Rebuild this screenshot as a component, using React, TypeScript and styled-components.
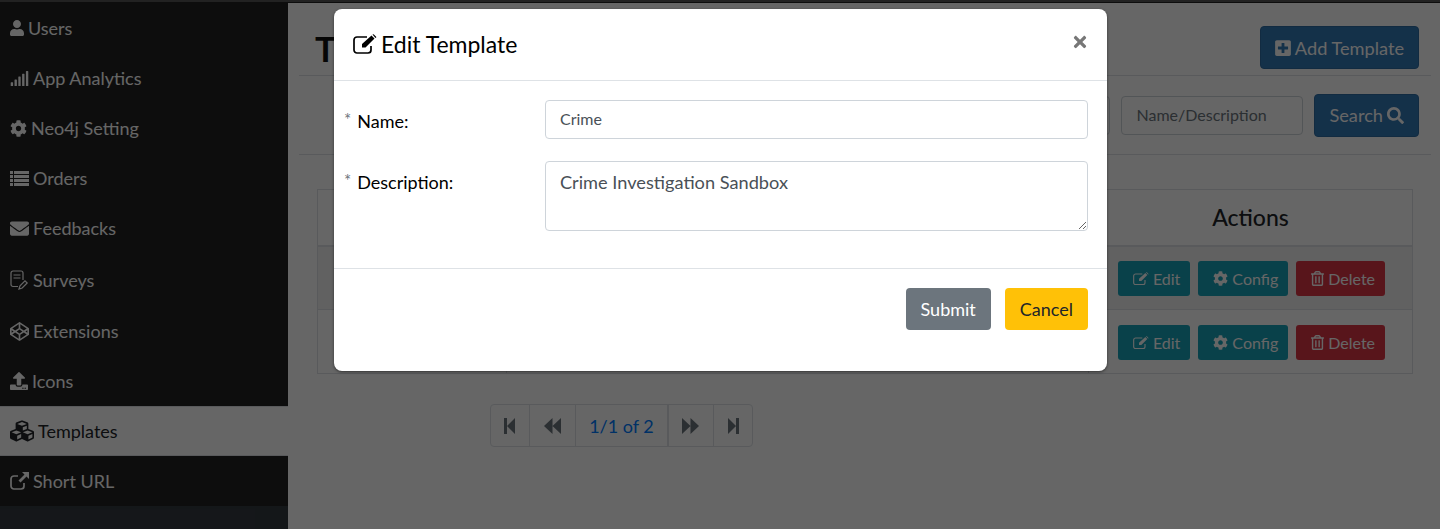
import { ReactNode } from 'react';
import styled, { createGlobalStyle } from 'styled-components';
import {
  FaCodepen,
  FaCog,
  FaCubes,
  FaEnvelope,
  FaPlusSquare,
  FaRegTrashAlt,
  FaSearch,
  FaSignal,
  FaTimes,
  FaUpload,
  FaUser,
} from 'react-icons/fa';

const ListIcon = () => (
  <svg width="19" height="15" viewBox="0 0 19 15" fill="currentColor">
    {[0, 4, 8, 12].map((y) => (
      <g key={y}>
        <rect x="0" y={y} width="3" height="3" />
        <rect x="4" y={y} width="15" height="3" />
      </g>
    ))}
  </svg>
);

const SurveyIcon = () => (
  <svg width="19" height="20" viewBox="0 0 19 20" fill="none" stroke="currentColor" strokeWidth="1.2">
    <path d="M8 16.5H3a2 2 0 0 1-2-2V3a2 2 0 0 1 2-2h8a2 2 0 0 1 2 2v7" />
    <path d="M3.5 5h7M3.5 8h7" />
    <path d="M9 19l1-3.2 5-5 2.2 2.2-5 5z" />
  </svg>
);

const ShareIcon = () => (
  <svg width="19" height="18" viewBox="0 0 19 18">
    <path d="M14 11v3a3 3 0 0 1-3 3H4a3 3 0 0 1-3-3V7a3 3 0 0 1 3-3h4" fill="none" stroke="currentColor" strokeWidth="1.7" />
    <path d="M12 0h7v7l-2.500-2.500-6 6-2-2 6-6z" fill="currentColor" />
  </svg>
);

const EditIcon = ({ width }: { width: number }) => (
  <svg width={width} height={(width * 20) / 24} viewBox="0 0 24 20">
    <path d="M18 12v4a3 3 0 0 1-3 3H4a3 3 0 0 1-3-3V6a3 3 0 0 1 3-3h10" fill="none" stroke="currentColor" strokeWidth="1.7" />
    <path d="M9 13.500v-3.500L18.500 1.500l3 3L12.500 13.500zM19.500 0.500a1 1 0 0 1 1.400 0l2 2a1 1 0 0 1 0 1.400L22 3.500z" fill="currentColor" />
  </svg>
);

const DoubleArrow = ({ flip }: { flip?: boolean }) => (
  <PagerSvg $flip={flip} width="17" height="16" viewBox="0 0 17 16">
    <path d="M0 8l8.500-8v16zM8.500 8L17 0v16z" fill="currentColor" />
  </PagerSvg>
);

const StepArrow = ({ flip }: { flip?: boolean }) => (
  <PagerSvg $flip={flip} width="11" height="16" viewBox="0 0 11 16">
    <path d="M0 0h3v16H0zM3 8l8-8v16z" fill="currentColor" />
  </PagerSvg>
);

const menu: { label: string; icon: ReactNode; slot: number; active?: boolean; tall?: boolean }[] = [
  { label: 'Users', icon: <FaUser size={16} />, slot: 14 },
  { label: 'App Analytics', icon: <FaSignal size={19} />, slot: 19 },
  { label: 'Neo4j Setting', icon: <FaCog size={17} />, slot: 17 },
  { label: 'Orders', icon: <ListIcon />, slot: 19 },
  { label: 'Feedbacks', icon: <FaEnvelope size={19} />, slot: 19 },
  { label: 'Surveys', icon: <SurveyIcon />, slot: 19, tall: true },
  { label: 'Extensions', icon: <FaCodepen size={19} />, slot: 19 },
  { label: 'Icons', icon: <FaUpload size={18} />, slot: 18 },
  { label: 'Templates', icon: <FaCubes size={24} />, slot: 24, active: true },
  { label: 'Short URL', icon: <ShareIcon />, slot: 19 },
];

const RowActions = () => (
  <Actions>
    <SmallButton $color="#17a2b8">
      <EditIcon width={16} /> Edit
    </SmallButton>
    <SmallButton $color="#17a2b8">
      <FaCog size={15} /> Config
    </SmallButton>
    <SmallButton $color="#dc3545">
      <IconSlot $width={13}>
        <FaRegTrashAlt size={15} />
      </IconSlot>{' '}
      Delete
    </SmallButton>
  </Actions>
);

export default function App() {
  return (
    <>
      <GlobalStyle />
      <Page>
        <TopBar />
        <Columns>
          <Sidebar>
            {menu.map((item) => (
              <MenuItem key={item.label} $active={item.active} $tall={item.tall}>
                <IconSlot $width={item.slot}>{item.icon}</IconSlot>
                {item.label}
              </MenuItem>
            ))}
          </Sidebar>
          <Main>
            <TitleRow>
              <Title>Templates</Title>
              <PrimaryButton>
                <IconSlot $width={16}>
                  <FaPlusSquare size={18} />
                </IconSlot>{' '}
                Add Template
              </PrimaryButton>
            </TitleRow>
            <FilterRow>
              <FilterSelect />
              <FilterInput placeholder="Name/Description" />
              <PrimaryButton>
                Search <FaSearch size={17} />
              </PrimaryButton>
            </FilterRow>
            <Table>
              <thead>
                <tr>
                  <HeadCell>Name</HeadCell>
                  <HeadCell>Description</HeadCell>
                  <HeadCell $width={324}>Actions</HeadCell>
                </tr>
              </thead>
              <tbody>
                <ShadedRow>
                  <Cell>Crime</Cell>
                  <Cell>Crime Investigation Sandbox</Cell>
                  <Cell>
                    <RowActions />
                  </Cell>
                </ShadedRow>
                <tr>
                  <Cell>Fraud</Cell>
                  <Cell>Fraud Detection Sandbox</Cell>
                  <Cell>
                    <RowActions />
                  </Cell>
                </tr>
              </tbody>
            </Table>
            <Pager>
              <PagerItem $width={38}>
                <StepArrow />
              </PagerItem>
              <PagerItem $width={47}>
                <DoubleArrow />
              </PagerItem>
              <PagerText $width={93}>1/1 of 2</PagerText>
              <PagerItem $width={46}>
                <DoubleArrow flip />
              </PagerItem>
              <PagerItem $width={39}>
                <StepArrow flip />
              </PagerItem>
            </Pager>
          </Main>
        </Columns>
        <Overlay>
          <Modal>
            <ModalHeader>
              <ModalTitle>
                <EditIcon width={24} /> Edit Template
              </ModalTitle>
              <CloseButton>
                <FaTimes size={18} />
              </CloseButton>
            </ModalHeader>
            <ModalBody>
              <FormRow>
                <FieldLabel>
                  <Star>*</Star>Name:
                </FieldLabel>
                <TextInput defaultValue="Crime" />
              </FormRow>
              <FormRow>
                <FieldLabel>
                  <Star>*</Star>Description:
                </FieldLabel>
                <TextArea defaultValue="Crime Investigation Sandbox" />
              </FormRow>
            </ModalBody>
            <ModalFooter>
              <FooterButton $bg="#6c757d" $fg="#fff">Submit</FooterButton>
              <FooterButton $bg="#ffc107" $fg="#212529">Cancel</FooterButton>
            </ModalFooter>
          </Modal>
        </Overlay>
      </Page>
    </>
  );
}

const GlobalStyle = createGlobalStyle`
  html, body {
    margin: 0;
    height: 100%;
    background: #fff;
    font-family: Lato, 'Liberation Sans', sans-serif;
  }
  * {
    box-sizing: border-box;
  }
`;

const Page = styled.div`
  height: 529px;
  overflow: hidden;
  display: flex;
  flex-direction: column;
  position: relative;
`;

const TopBar = styled.div`
  height: 3px;
  flex: none;
  background: #555;
  border-bottom: 1px solid #222;
`;

const Columns = styled.div`
  flex: 1;
  display: flex;
  min-height: 0;
`;

const Sidebar = styled.nav`
  width: 288px;
  flex: none;
  background: #343a40;
`;

const MenuItem = styled.div<{ $active?: boolean; $tall?: boolean }>`
  display: flex;
  align-items: center;
  gap: 4px;
  height: ${(p) => (p.$tall ? 53 : 50)}px;
  padding: 0 10px;
  font-size: 18px;
  color: ${(p) => (p.$active ? '#212529' : '#fff')};
  background: ${(p) => (p.$active ? '#fff' : '#222')};
  box-shadow: ${(p) => (p.$active ? 'inset 0 1px #dee2e6, inset 0 -1px #dee2e6' : 'none')};
`;

const IconSlot = styled.span<{ $width: number }>`
  flex: none;
  width: ${(p) => p.$width}px;
  display: flex;
  justify-content: center;
  svg {
    flex: none;
  }
`;

const Main = styled.main`
  flex: 1;
  min-width: 0;
  padding: 0 9px 0 11px;
`;

const TitleRow = styled.div`
  display: flex;
  justify-content: space-between;
  align-items: center;
  height: 73px;
  padding: 17px 12px 0 16px;
  border-bottom: 1px solid #dee2e6;
  overflow: hidden;
`;

const Title = styled.h1`
  margin: 0;
  font-size: 35px;
  font-weight: 700;
  letter-spacing: 3px;
  color: #111;
`;

const PrimaryButton = styled.button`
  display: inline-flex;
  align-items: center;
  gap: 4px;
  height: 43px;
  padding: 0 14px;
  border: 1px solid #2e6da4;
  border-radius: 4px;
  background: #337ab7;
  color: #fff;
  font: inherit;
  font-size: 18.200px;
`;

const FilterRow = styled.div`
  display: flex;
  justify-content: flex-end;
  align-items: center;
  gap: 11px;
  height: 79px;
  padding-right: 12px;
  border-bottom: 1px solid #dee2e6;
`;

const FilterSelect = styled.div`
  width: 200px;
  height: 39px;
  border: 1px solid #ced4da;
  border-radius: 4px;
`;

const FilterInput = styled.input`
  width: 182px;
  height: 39px;
  padding: 0 14px 2px;
  border: 1px solid #ced4da;
  border-radius: 4px;
  font: inherit;
  font-size: 16px;
  background: #fff;
  &::placeholder {
    color: #6c757d;
    opacity: 1;
  }
`;

const Table = styled.table`
  width: 1096px;
  margin: 34px 0 0 18px;
  border-collapse: collapse;
  color: #212529;
`;

const HeadCell = styled.th<{ $width?: number }>`
  height: 56px;
  width: ${(p) => (p.$width ? `${p.$width}px` : 'auto')};
  border: 1px solid #dee2e6;
  border-bottom-width: 2px;
  font-size: 23px;
  font-weight: 500;
`;

const ShadedRow = styled.tr`
  background: rgba(0, 0, 0, 0.05);
`;

const Cell = styled.td`
  height: 64px;
  padding: 2px 18px 0 20px;
  border: 1px solid #dee2e6;
  font-size: 18px;
`;

const Actions = styled.div`
  display: flex;
  justify-content: center;
  gap: 8px;
`;

const SmallButton = styled.button<{ $color: string }>`
  display: inline-flex;
  align-items: center;
  gap: 4px;
  height: 35px;
  padding: 0 10px 0 15px;
  border: 0;
  border-radius: 3px;
  background: ${(p) => p.$color};
  color: #fff;
  font: inherit;
  font-size: 16px;
`;

const Pager = styled.div`
  display: flex;
  width: 263px;
  height: 43px;
  margin: 30px 0 0 191px;
  border: 1px solid #dee2e6;
  border-radius: 4px;
`;

const PagerItem = styled.div<{ $width: number }>`
  width: ${(p) => p.$width}px;
  display: flex;
  align-items: center;
  justify-content: center;
  color: #6c757d;
  & + & {
    border-left: 1px solid #dee2e6;
  }
`;

const PagerSvg = styled.svg<{ $flip?: boolean }>`
  transform: ${(p) => (p.$flip ? 'scaleX(-1)' : 'none')};
`;

const PagerText = styled(PagerItem)`
  border-left: 1px solid #dee2e6;
  border-right: 1px solid #dee2e6;
  color: #007bff;
  font-size: 18px;
`;

const Overlay = styled.div`
  position: absolute;
  inset: 0;
  background: rgba(0, 0, 0, 0.6);
  display: flex;
  justify-content: center;
  align-items: flex-start;
  padding: 9px 0 0 1px;
`;

const Modal = styled.div`
  width: 773px;
  height: 362px;
  background: #fff;
  border-radius: 8px;
  box-shadow: 0 1px 3px rgba(0, 0, 0, 0.5);
  display: flex;
  flex-direction: column;
`;

const ModalHeader = styled.div`
  height: 72px;
  flex: none;
  display: flex;
  justify-content: space-between;
  padding: 0 18px 0 19px;
  border-bottom: 1px solid #dee2e6;
`;

const ModalTitle = styled.h5`
  display: flex;
  align-items: center;
  gap: 4px;
  margin: 0;
  padding-bottom: 2px;
  font-size: 23px;
  font-weight: 400;
  color: #000;
`;

const CloseButton = styled.button`
  align-self: flex-start;
  margin-top: 24px;
  padding: 0;
  border: 0;
  background: none;
  color: #777;
  display: flex;
`;

const ModalBody = styled.div`
  height: 188px;
  flex: none;
  padding: 19px 19px 0 10px;
  display: flex;
  flex-direction: column;
  gap: 22px;
  border-bottom: 1px solid #dee2e6;
`;

const FormRow = styled.div`
  display: grid;
  grid-template-columns: 201px 1fr;
`;

const FieldLabel = styled.label`
  height: 39px;
  font-size: 18px;
  line-height: 40px;
  color: #000;
`;

const Star = styled.span`
  color: #6c757d;
  font-size: 17px;
  vertical-align: 2px;
  margin-right: 6px;
`;

const TextInput = styled.input`
  width: 100%;
  height: 39px;
  padding: 0 14px 2px;
  border: 1px solid #ced4da;
  border-radius: 4px;
  font: inherit;
  font-size: 16px;
  color: #495057;
`;

const TextArea = styled.textarea`
  display: block;
  width: 100%;
  height: 70px;
  padding: 9px 14px;
  border: 1px solid #ced4da;
  border-radius: 4px;
  font: inherit;
  font-size: 18.200px;
  color: #495057;
`;

const ModalFooter = styled.div`
  flex: 1;
  display: flex;
  justify-content: flex-end;
  gap: 14px;
  padding: 19px 19px 0 0;
`;

const FooterButton = styled.button<{ $bg: string; $fg: string }>`
  height: 42px;
  padding: 0 15px;
  border: 0;
  border-radius: 4px;
  background: ${(p) => p.$bg};
  color: ${(p) => p.$fg};
  font: inherit;
  font-size: 18px;
`;
